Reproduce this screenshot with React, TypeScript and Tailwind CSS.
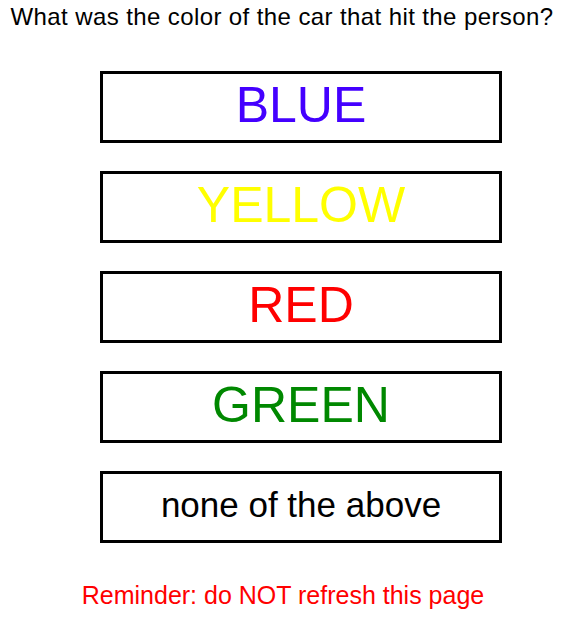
const options = [
	{label: "BLUE", color: "text-[#4400ff]", size: "text-[50px]"},
	{label: "YELLOW", color: "text-[#ffff00]", size: "text-[50px]"},
	{label: "RED", color: "text-[#ff0000]", size: "text-[50px]"},
	{label: "GREEN", color: "text-[#008800]", size: "text-[50px]"},
	{label: "none of the above", color: "text-black", size: "text-[35px]"},
];

export default function App() {
	return (
		<div className="w-[570px] h-[623px] bg-white font-['Liberation_Sans',Arial,sans-serif] flex flex-col items-center">
			<h1 className="mt-[3px] ml-[-6px] text-[24px] leading-[28px] tracking-[0.4px] text-black font-normal">
				What was the color of the car that hit the person?
			</h1>
			<div className="mt-[40px] flex flex-col gap-[28px] ml-[32px]">
				{options.map((opt) => (
					<button
						key={opt.label}
						type="button"
						className={`w-[402px] h-[72px] border-[3px] border-black bg-white flex items-center justify-center pb-[3px] ${opt.color} ${opt.size}`}
					>
						{opt.label}
					</button>
				))}
			</div>
			<p className="mt-[37px] ml-[-4px] text-[25px] leading-[30px] text-[#ff0000]">
				Reminder: do NOT refresh this page
			</p>
		</div>
	);
}
